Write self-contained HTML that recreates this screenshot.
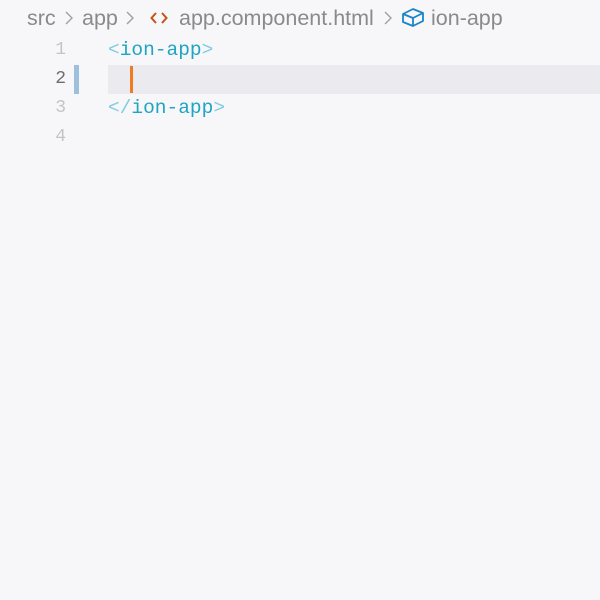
<!DOCTYPE html>
<html><head><style>
body{margin:0;width:600px;height:600px;background:#f7f6f9;position:relative;overflow:hidden;font-family:"Liberation Sans",sans-serif}
.bc{position:absolute;top:5px;font-size:21.5px;color:#8a8a8e;white-space:nowrap;line-height:26px}
.ch{position:absolute;top:10px}
.ln{position:absolute;left:40px;width:26px;text-align:right;font-family:"Liberation Mono",monospace;font-size:18px;color:#c4c4c8;line-height:29px}
.code{position:absolute;left:108px;font-family:"Liberation Mono",monospace;font-size:19.5px;color:#1fa5c2;line-height:29px;white-space:pre}
.b{color:#7fcde0}
</style></head><body>
<div class="bc" style="left:27px">src</div>
<svg class="ch" style="left:64px" width="10" height="16" viewBox="0 0 10 16"><path d="M2 2L8 8L2 14" fill="none" stroke="#a0a0a4" stroke-width="1.4"/></svg>
<div class="bc" style="left:82px">app</div>
<svg class="ch" style="left:125px" width="10" height="16" viewBox="0 0 10 16"><path d="M2 2L8 8L2 14" fill="none" stroke="#a0a0a4" stroke-width="1.4"/></svg>
<svg style="position:absolute;left:150px;top:11px" width="18" height="14" viewBox="0 0 18 14"><path d="M6 2L1.5 7L6 12M12 2L16.5 7L12 12" fill="none" stroke="#c8511b" stroke-width="2"/></svg>
<div class="bc" style="left:179px">app.component.html</div>
<svg class="ch" style="left:383px" width="10" height="16" viewBox="0 0 10 16"><path d="M2 2L8 8L2 14" fill="none" stroke="#a0a0a4" stroke-width="1.4"/></svg>
<svg style="position:absolute;left:401px;top:7px" width="24" height="21" viewBox="0 0 24 21"><path d="M2 7L12 2L22 6L22 14L12 19L2 15Z M2 7L12 11L22 6 M12 11L12 19" fill="none" stroke="#1a85c8" stroke-width="1.8" stroke-linejoin="round"/></svg>
<div class="bc" style="left:431px">ion-app</div>
<div style="position:absolute;left:108px;top:65px;width:492px;height:29px;background:#ebeaee"></div>
<div style="position:absolute;left:74px;top:65px;width:5px;height:29px;background:#9dc1dc"></div>
<div style="position:absolute;left:130px;top:66px;width:3px;height:27px;background:#ef7c22"></div>
<div class="ln" style="top:36px">1</div>
<div class="ln" style="top:65px;color:#6e6e72">2</div>
<div class="ln" style="top:94px">3</div>
<div class="ln" style="top:123px">4</div>
<div class="code" style="top:36px"><span class="b">&lt;</span>ion-app<span class="b">&gt;</span></div>
<div class="code" style="top:94px"><span class="b">&lt;/</span>ion-app<span class="b">&gt;</span></div>
</body></html>
